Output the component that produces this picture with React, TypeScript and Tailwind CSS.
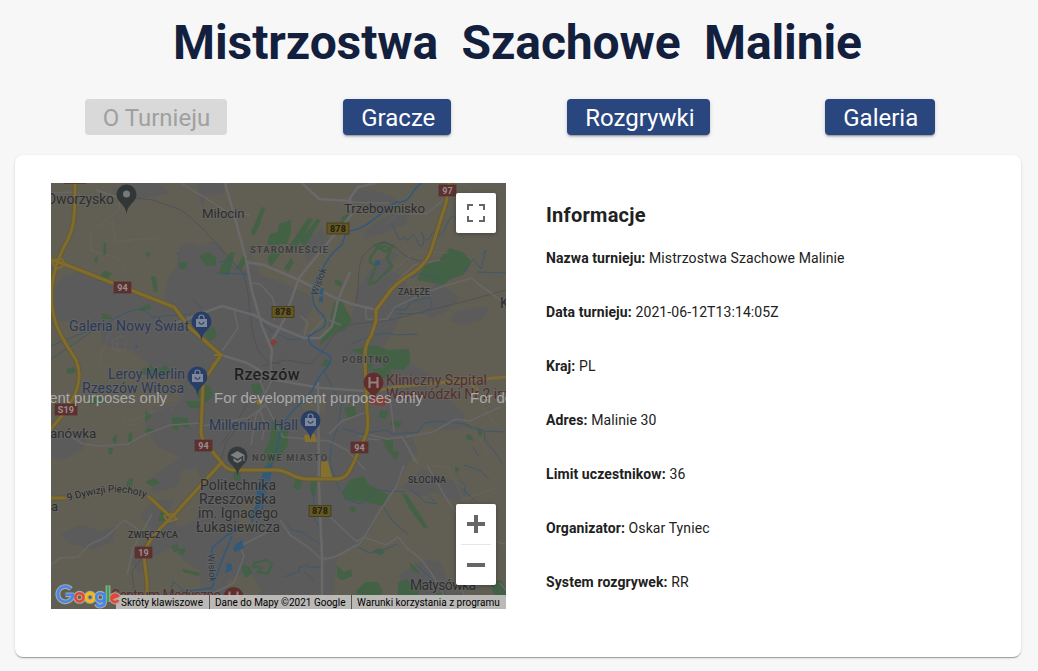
import type { ReactNode } from 'react';

const tabs = [
  { label: 'O Turnieju', width: 'w-[142px]', disabled: true },
  { label: 'Gracze', width: 'w-[108px]', disabled: false },
  { label: 'Rozgrywki', width: 'w-[143px]', disabled: false },
  { label: 'Galeria', width: 'w-[110px]', disabled: false },
];

const details = [
  ['Nazwa turnieju:', 'Mistrzostwa Szachowe Malinie'],
  ['Data turnieju:', '2021-06-12T13:14:05Z'],
  ['Kraj:', 'PL'],
  ['Adres:', 'Malinie 30'],
  ['Limit uczestnikow:', '36'],
  ['Organizator:', 'Oskar Tyniec'],
  ['System rozgrywek:', 'RR'],
];

const urban = [
  'M51 293 63 277 78 272 91 278 108 283 128 290 150 297 164 303 168 278 176 268 180 247 189 241 198 247 214 241 226 252 224 262 246 270 254 262 246 240 250 258 262 276 290 286 310 296 313 306 304 322 302 334 320 336 334 322 352 318 356 292 370 270 392 252 400 254 388 266 402 278 412 292 425 291 439 282 460 298 444 313 430 318 418 310 403 312 392 334 382 348 407 362 430 374 426 390 451 401 464 414 464 427 448 431 426 427 412 438 418 451 406 467 397 485 380 505 372 530 356 546 338 560 331 609 202 609 200 571 184 560 171 548 147 560 140 575 132 563 145 544 151 528 140 516 153 502 174 499 191 484 198 468 178 456 158 447 145 425 155 408 177 401 184 385 165 374 144 360 130 350 103 345 100 330 78 323 54 320Z',
  'M112 190 135 183 158 183 169 193 145 198 126 204Z',
  'M196 183 225 183 222 194 206 195 203 210Z',
  'M366 229 387 216 410 212 406 224 386 232 364 239Z',
  'M348 192 372 190 392 196 402 206 384 212 356 204Z',
  'M475 307 490 307 482 320 464 325 450 321 456 312Z',
  'M51 426 69 433 89 430 83 449 62 460 51 456Z',
  'M154 476 184 455 201 459 190 479 170 489 151 493Z',
  'M401 487 422 470 451 480 470 493 456 501 434 492 420 497Z',
  'M60 534 80 525 100 531 116 526 112 542 94 549 71 544Z',
  'M400 574 425 559 441 563 450 586 466 595 463 609 398 609Z',
  'M300 240 322 230 330 240 318 252 306 262Z',
];

const fields = [
  'M182 470 196 468 204 486 196 520 178 528 170 510Z',
  'M338 556 352 548 372 552 380 560 366 580 346 596 334 580Z',
  'M240 500 258 498 254 530 238 536Z',
  'M226 580 250 572 262 590 248 609 232 606Z',
  'M300 404 324 400 326 412 306 414Z',
];

const parks = [
  'M267 245 270 234 278 232 279 224 291 220 291 232 287 244Z',
  'M262 207 265 208 260 224 254 236 251 232Z',
  'M289 246 308 218 313 219 296 249Z', 'M300 240 317 219 321 220 304 248Z',
  'M268 257 276 250 280 254 270 268ZM284 268 291 258 294 262 288 272Z',
  'M270 253 276 250 276 258 268 262Z',
  'M199 256 208 252 216 258 216 265 206 266Z', 'M178 263 187 262 186 269 180 269Z',
  'M222 264 230 252 235 253 229 275 219 274Z', 'M235 270 243 256 249 258 241 269Z',
  'M417 280 424 266 438 260 445 253 450 248 464 253 471 262 464 274 451 279 442 285Z',
  'M151 276 156 277 158 291 154 292Z', 'M145 253 150 252 149 258Z', 'M104 243 106 243 106 255 103 255Z', 'M94 259 98 256 96 265Z', 'M97 281 104 271 112 273 106 282Z',
  'M138 308 150 304 151 309 141 311Z', 'M102 313 111 316 112 319 102 319Z',
  'M334 303 341 300 352 320 346 329 334 334 320 345 322 334 328 328Z',
  'M350 350 374 345 388 350 409 349 410 362 404 370 388 369 376 360Z',
  'M372 369 388 367 393 376 376 379Z', 'M325 359 330 361 328 366 321 366Z',
  'M196 382 210 386 213 396 204 404 197 396Z', 'M185 401 200 401 201 408 190 408Z', 'M142 369 151 365 157 371 165 365 173 372 165 377 141 374Z',
  'M172 417 188 418 189 428 179 425 178 431 172 428Z', 'M145 411 153 416 145 422Z', 'M147 428 155 430 151 434 145 432Z', 'M112 439 117 434 116 446Z', 'M129 433 132 432 132 445 128 442Z', 'M108 448 113 448 112 454 109 454Z',
  'M251 384 260 383 264 390 259 395 252 391Z', 'M272 420 280 422 288 432 288 445 278 460 268 466 264 452 270 440Z',
  'M296 478 303 478 300 490 293 488Z', 'M311 480 317 481 315 497 310 492Z',
  'M342 492 350 480 364 476 368 484 388 495 383 506 365 502 344 499Z',
  'M392 420 402 423 399 428 390 425Z', 'M382 439 393 441 393 451 399 452 396 460 387 450Z', 'M406 494 417 510 428 528 424 528 409 508 402 494Z',
  'M128 480 133 478 132 488 126 487Z', 'M145 482 154 478 160 483 151 486Z', 'M171 546 177 544 180 550 174 552Z', 'M182 569 201 573 198 576 183 572Z',
  'M179 550 186 547 184 555 180 554Z', 'M161 511 168 513 167 520 158 522Z', 'M233 471 240 471 241 481 234 480Z',
  'M344 572 351 569 352 576 343 580 337 578 337 566Z', 'M356 591 365 582 378 582 383 592 375 602 359 600Z', 'M398 583 407 579 414 588 421 590 414 600 398 596Z', 'M436 594 445 591 446 605 439 603Z',
  'M352 599 361 589 370 595 362 609 350 606Z',
  'M381 410 389 412 385 419 378 417Z', 'M352 506 356 509 354 513 349 510Z', 'M378 548 386 552 380 555 372 552Z', 'M409 562 414 566 420 573 413 572Z',
  'M335 279 342 282 341 287 335 284Z', 'M66 369 74 367 76 372 68 374Z', 'M88 397 103 397 108 403 90 404Z',
  'M206 329 214 327 217 336 210 341 205 336Z', 'M342 217 350 213 348 220 340 226Z',
  'M478 428 482 430 482 436 478 435Z', 'M467 434 472 436 473 441 466 439Z', 'M455 467 460 468 456 474Z', 'M490 581 501 580 506 588 506 600 494 594Z',
  'M242 565 250 567 252 573 246 578 243 573Z', 'M366 362 374 364 370 372Z', 'M344 408 354 406 357 416 348 418Z',
];

const parkOutlines = [
  'M370 258 377 248 385 246 391 250 387 258 392 266 376 282 369 284 376 266 370 262Z',
  'M376 246 384 242 393 246 386 252Z',
  'M254 563 266 560 272 564 268 574 258 572 262 568 253 566Z',
];

const water = [
  'M422 183C409 191 413 200 401 202C391 200 394 209 382 213C372 221 362 230 348 231C341 239 345 245 339 247C331 254 325 262 320 274L313 288C311 306 317 310 322 314C328 322 326 328 317 331L309 336C306 346 321 350 330 356C333 361 327 368 319 377C315 384 313 391 306 398C297 407 289 413 281 427L277 450C269 462 273 475 266 488C262 498 264 510 258 520',
  'M240 529 226 536 212 548 211 560M232 536 222 560 212 588 190 591',
];

const streams = [
  'M219 262 231 260 246 277M215 273 247 274',
  'M51 359 68 348 88 334 98 326 102 322',
  'M51 346C74 335 102 328 112 320 136 307 141 306 152 317L191 314',
  'M192 298 202 309M238 309 252 313 270 330 290 340 305 338',
  'M392 224C397 235 400 245 404 236C409 248 411 228 416 238C422 257 427 238 421 232C431 253 430 224 436 235C447 239 447 211 455 217C461 231 466 213 473 222L480 212 488 217',
  'M389 317 395 309 406 310 410 302 430 297 432 307 422 313 396 314',
  'M411 278 420 273 438 280M477 272 506 273M465 272 473 259 481 269 486 250 482 255',
  'M325 372 334 391 342 402 338 426 331 446 330 465',
  'M342 428 360 434 386 430 393 434 418 432 424 423 438 421 466 424 484 431 506 432',
  'M484 431 485 440 494 451 502 463M464 425 477 431',
  'M330 465 339 488 348 500 361 504 376 490 406 492',
  'M383 506 393 522 408 534M409 488 425 502 437 504 428 495',
  'M464 465 479 470 489 479M459 480 466 486 464 491 476 501',
  'M320 545 322 530 315 520 313 490M286 522 292 530 302 532 318 543',
  'M284 577 300 571 298 568 308 564M304 572 314 580M306 567 322 567',
  'M358 547 369 553 385 549 397 544',
  'M158 597 171 592 190 591M171 592 173 581 190 596',
  'M351 344 372 335 387 333 396 335 418 334',
  'M415 563 435 582 441 593M478 456 473 447',
];

const streets = [
  'M225 183 233 211 246 259 252 291 262 326 272 350 271 362',
  'M246 262 264 265 299 280 335 298 352 304 377 310',
  'M352 214 325 246 299 278 284 320 270 344',
  'M176 323 222 306 254 315 270 324 304 338 320 338 332 326 338 300 350 272',
  'M302 183 319 199 350 201M377 183 358 187 350 198 350 210',
  'M221 355 247 363 276 380 321 388 366 391',
  'M318 382 319 488 322 555 322 609',
];

const minorStreets = [
  'M181 183C197 193 214 203 226 211L250 215M251 283 260 284 272 297 276 309 274 320',
  'M234 309 238 328 222 351M300 316 308 322 304 336',
  'M350 202 372 203 389 203M398 214 426 214 446 198 450 196',
  'M271 355 271 382 262 400 260 410 265 425 262 440M257 372 265 394M251 445 256 415 266 402',
  'M201 423 170 425 144 435 128 444 98 446 83 444 69 435 54 430',
  'M202 426 248 418 266 405 283 437 329 441 347 450 358 462 365 470',
  'M329 434 342 421 367 412M390 397 394 432M366 434 387 439 402 437 418 464',
  'M359 436 370 439 379 440M404 440 415 462M405 437 433 432 456 419 470 421 500 407',
  'M427 465 443 493 451 506 460 518M404 465 396 487 379 512 363 539 359 544 340 555 323 560',
  'M329 516 357 542M357 541 364 537 386 545 398 537 407 548 421 559 432 574 448 603',
  'M280 520 290 535 308 547 320 558 333 558 356 545',
  'M51 565 60 558 78 557 89 545 106 537 124 520 136 528 148 539',
  'M180 609 234 583 244 556 240 546 270 531M127 575 133 549 152 514',
  'M377 310 390 288 414 265 440 260M377 309 366 308 366 319 379 320M379 320 387 319 395 307 410 300 428 292 441 287 472 278 477 283 506 304',
  'M51 193 79 192M96 190 120 198M324 319 309 335M329 320 341 325',
  'M506 544 497 542M500 583 506 590M462 590 470 609',
];

const rails = [
  'M136 198 153 200 181 210C206 228 220 250 239 268C249 277 248 303 252 328 256 352 262 362 280 364',
  'M262 366 286 360 310 364 322 352 333 336 345 325 372 322 390 320 430 310 470 300 506 290',
  'M356 303C361 278 354 258 372 247C382 238 394 244 404 255 421 264 436 263 448 256',
  'M221 444 235 425 248 402 271 370M220 465 226 442 244 418M136 609 132 571 142 558 152 531',
];

const yellowRoads = [
  'M75 183C75 218 74 230 65 245C53 268 49 290 53 312C56 331 67 345 76 360C85 380 73 400 65 412L50 430',
  'M51 260 64 264 174 307 190 328 221 355 203 382 201 432Q201 440 211 450L222 463Q226 469 232 470L276 470C288 470 292 478 306 479L339 479Q347 478 352 466L366 435Q369 427 367 412L365 361Q364 345 371 336L376 321 376 310 391 290Q398 282 414 272Q429 262 433 244L446 203 449 183',
  'M221 463 172 517Q145 541 144 556L147 582Q148 594 144 609',
  'M51 498 66 498M148 496 172 518',
];

const pinPath = 'M0 18C-1 11-4 9-7.5 5A10 10 0 1 1 7.5 5C4 9 1 11 0 18Z';

function Label({ x, y, size = 14, fill = '#2c2e30', children, spacing = 0, weight = 400, length }: {
  x: number; y: number; size?: number; fill?: string; children: ReactNode; spacing?: number; weight?: number; length?: number;
}) {
  return (
    <text x={x} y={y} fontSize={size} fill={fill} fontWeight={weight} letterSpacing={spacing} textLength={length}
      stroke="#6b6a66" strokeWidth="2" strokeOpacity=".5" paintOrder="stroke" strokeLinejoin="round">
      {children}
    </text>
  );
}

function RoadSign({ x, y, children, yellow = false, width = 17 }: { x: number; y: number; children: string; yellow?: boolean; width?: number }) {
  return (
    <g>
      <rect x={x} y={y} width={width} height="11" fill={yellow ? '#655720' : '#5e3030'} stroke={yellow ? '#3d3518' : '#593030'} strokeWidth=".7" />
      <text x={x + width / 2} y={y + 8.8} fontSize="9" fontWeight="700" textAnchor="middle" letterSpacing=".2" fill={yellow ? '#20201a' : '#989090'}>{children}</text>
    </g>
  );
}

function Pin({ x, y, fill, kind }: { x: number; y: number; fill: string; kind: 'shop' | 'hospital' | 'school' | 'dot' }) {
  return (
    <g transform={`translate(${x} ${y})`}>
      <path d={pinPath} fill={fill} />
      {kind === 'dot' && <circle cy="-2" r="3.5" fill="#74797a" />}
      {kind === 'shop' && <g><path d="M-5.5-4H5.5V4H-5.5Z" fill="#7f889a" /><path d="M-2.5-4V-5.5A2.5 2.5 0 0 1 2.5-5.5V-4" fill="none" stroke="#7f889a" strokeWidth="1.2" /><path d="M-2.7-1Q0 3.5 2.7-1" fill="none" stroke={fill} strokeWidth="1.2" /></g>}
      {kind === 'hospital' && <path d="M-4-7V4M4-7V4M-4-1.5H4" fill="none" stroke="#987e7e" strokeWidth="2.1" />}
      {kind === 'school' && <path d="M-7-3 0-7 7-3 0 1Z M-4 0V3L0 5 4 3V0L0 3ZM5.8-3H7V3H5.8Z" fill="#7d8182" />}
    </g>
  );
}

function TournamentMap() {
  return (
    <svg viewBox="51 183 455 426" className="block h-full w-full font-['Roboto',sans-serif]">
      <rect x="51" y="183" width="455" height="426" fill="#615e54" />
      {urban.map((d) => <path key={d} d={d} fill="#5b5b5b" />)}
      {fields.map((d) => <path key={d} d={d} fill="#615e54" />)}
      {parks.map((d) => <path key={d} d={d} fill="#436144" />)}
      <g fill="none" stroke="#436144" strokeWidth="2.4">{parkOutlines.map((d) => <path key={d} d={d} />)}</g>
      <g fill="none" stroke="#525256" strokeWidth="1">{rails.map((d) => <path key={d} d={d} />)}</g>
      <g fill="none" stroke="#3f586b" strokeWidth="1">{streams.map((d) => <path key={d} d={d} />)}</g>
      <g fill="none" stroke="#676767" strokeWidth="1.6" strokeLinejoin="round">{minorStreets.map((d) => <path key={d} d={d} />)}</g>
      <g fill="none" stroke="#696969" strokeWidth="2.6" strokeLinejoin="round">{streets.map((d) => <path key={d} d={d} />)}</g>
      <g fill="none" stroke="#6b6a64" strokeWidth=".7" opacity=".7">
        <path d="M112 341 121 336 127 340 124 351 113 350ZM118 337 117 351M113 344 126 344M122 413 127 425 138 424M129 422 175 403M185 393 171 411" />
        <path d="M387 276 409 257 402 241M409 257 420 251 448 253M480 403 498 428M471 424 489 455M430 465 449 468 463 499 480 494 498 487M459 183 472 191M398 213 385 224" />
        <path d="M120 198 119 210 97 227 90 235 91 250 98 253M91 250 119 259 127 271M112 220 116 242 140 239 158 239M99 365 102 351 116 320" />
      </g>
      <g fill="none" stroke="#33597a" strokeWidth="1.6">{water.map((d) => <path key={d} d={d} />)}</g>
      <path d="M265 466 272 464 272 474 264 483 265 496 258 510 252 524 250 516 256 505 257 490ZM236 544 242 540 244 548 235 552 233 549ZM375 261 380 260 380 265 375 265ZM320 289 324 288 323 295 319 294ZM319 297 323 296 323 302 319 302ZM227 563 232 564 232 570 225 573Z" fill="#31597a" />
      <path d="M136 345 138 347 135 349ZM177 252 179 253 178 255Z" fill="#315b78" />
      <g fill="none" stroke="#635a38" strokeWidth="5" strokeLinejoin="round">{yellowRoads.map((d) => <path key={d} d={d} />)}</g>
      <g fill="none" stroke="#816c2c" strokeWidth="3" strokeLinejoin="round">{yellowRoads.map((d) => <path key={d} d={d} />)}</g>
      <path d="M366 393 394 387 506 377" fill="none" stroke="#7b6c35" strokeWidth="2.8" />
      <path d="M469 384 478 389 475 393 467 391" fill="none" stroke="#7b6c35" strokeWidth="1.6" />
      <path d="M164 516 172 514 177 519 168 522ZM51 260 62 259 65 265 56 269ZM214 355 222 355 212 366" fill="none" stroke="#816c2c" strokeWidth="1.8" />
      <path d="M321 462 328 461 332 477 321 477ZM304 435 315 434 317 442 305 442ZM256 400 263 400 261 405 257 404Z" fill="#86702d" />
      <path d="M370 397 386 396 388 402 384 406 369 404ZM271 340 274 339 277 342 273 346 270 343Z" fill="#813f3b" />

      <RoadSign x={114} y={282}>94</RoadSign><RoadSign x={195} y={440}>94</RoadSign><RoadSign x={351} y={442}>94</RoadSign>
      <RoadSign x={439} y={185}>97</RoadSign><RoadSign x={55} y={404} width={22}>S19</RoadSign><RoadSign x={135} y={547}>19</RoadSign>
      <RoadSign x={327} y={223} width={22} yellow>878</RoadSign><RoadSign x={272} y={306.5} width={22} yellow>878</RoadSign><RoadSign x={309} y={505.5} width={22} yellow>878</RoadSign>
      <path d="M64 183.5H86" stroke="#603737" />

      <Label x={47} y={204} length={67}>Dworzysko</Label>
      <Label x={202} y={217.5} size={13.3} length={42.5}>Miłocin</Label>
      <Label x={344} y={213} size={13.3} length={81}>Trzebownisko</Label>
      <Label x={250} y={253} size={9.3} fill="#3b3d3f" weight={700} length={78}>STAROMIEŚCIE</Label>
      <Label x={398} y={295} size={9.2} fill="#303233" weight={500} length={32}>ZAŁĘŻE</Label>
      <Label x={342} y={363} size={9.2} fill="#3b3d3f" weight={700} length={47}>POBITNO</Label>
      <Label x={500} y={308}>K</Label>
      <Label x={69} y={331} fill="#29395a" length={120}>Galeria Nowy Świat</Label>
      <Label x={108} y={379} fill="#29395a" length={77}>Leroy Merlin</Label>
      <Label x={82} y={393} fill="#29395a" length={102}>Rzeszów Witosa</Label>
      <Label x={234} y={379.5} size={16} fill="#1e2021" weight={500} length={65.5}>Rzeszów</Label>
      <Label x={209} y={430} fill="#29395a" length={89}>Millenium Hall</Label>
      <Label x={386} y={385} fill="#552e2e" length={101}>Kliniczny Szpital</Label>
      <Label x={386} y={399} fill="#552e2e">Wojewódzki Nr 2 im.</Label>
      <Label x={50} y={438} size={13.3}>anówka</Label>
      <Label x={252} y={461} size={9.2} fill="#3b3d3f" weight={700} length={75}>NOWE MIASTO</Label>
      <Label x={408} y={483} size={9} weight={500} length={38}>SŁOCINA</Label>
      <Label x={200} y={490} length={76}>Politechnika</Label><Label x={199} y={504} length={77}>Rzeszowska</Label><Label x={198} y={518} length={80}>im. Ignacego</Label><Label x={196} y={532} length={84}>Łukasiewicza</Label>
      <Label x={128} y={538} size={9.3} weight={500} length={50}>ZWIĘCZYCA</Label>
      <Label x={51} y={511} size={13}>a</Label>
      <Label x={410} y={590} length={66}>Matysówka</Label>
      <Label x={111} y={600} fill="#552e2e" length={110}>Centrum Medyczne</Label>
      <Label x={171} y={613} fill="#552e2e">Promedica</Label>
      <path id="district-road" d="M68 501Q88 495 108 492.5Q128 491 149 499" fill="none" />
      <text fontSize="10" fill="#242526" stroke="#68665f" strokeWidth="1.8" paintOrder="stroke"><textPath href="#district-road" textLength="79">9 Dywizji Piechoty</textPath></text>
      <g transform="translate(317 296) rotate(-70)"><Label x={0} y={0} size={9.5} fill="#29384a">Wisłok</Label></g>
      <g transform="translate(208 554) rotate(87)"><Label x={0} y={0} size={9.5} fill="#29384a">Wisłok</Label></g>

      <Pin x={126.5} y={196} fill="#313637" kind="dot" />
      <Pin x={201.5} y={323} fill="#293e67" kind="shop" />
      <Pin x={197.5} y={378} fill="#293e67" kind="shop" />
      <Pin x={310.5} y={422} fill="#293e67" kind="shop" />
      <Pin x={373.5} y={384} fill="#602e2d" kind="hospital" />
      <Pin x={237.5} y={458} fill="#353a3c" kind="school" />
      <Pin x={233.5} y={598.5} fill="#602e2d" kind="hospital" />
      <g fontFamily="Liberation Sans, Arial, sans-serif" fontSize="15" fill="#aaa9a8">
        <text x="-42" y="403" textLength="209">For development purposes only</text>
        <text x="214" y="403" textLength="209">For development purposes only</text>
        <text x="470" y="403" textLength="209">For development purposes only</text>
      </g>
    </svg>
  );
}

const logoStrokes = [
  { d: 'M17 7A7.6 7.6 0 1 0 19 12.8H11.5', color: '#4285f4' },
  { d: 'M29.6 15.3A4.1 4.1 0 1 1 21.4 15.3A4.1 4.1 0 1 1 29.6 15.3', color: '#ea4335' },
  { d: 'M40.2 15.3A4.1 4.1 0 1 1 32 15.3A4.1 4.1 0 1 1 40.2 15.3', color: '#fbbc05' },
  { d: 'M50.4 15.3A4.1 4.1 0 1 1 42.2 15.3A4.1 4.1 0 1 1 50.4 15.3M50.6 11V20C50.6 24.6 44 25.5 42.4 21.8', color: '#4285f4' },
  { d: 'M54 3.5V20', color: '#34a853' },
  { d: 'M57.5 16.5 63.8 13.8A3.7 3.7 0 1 0 64.3 18', color: '#ea4335' },
];

function GoogleLogo() {
  return (
    <svg className="absolute bottom-0 left-[3px] h-[27px] w-[67px]" viewBox="0 0 67 27" fill="none">
      <g stroke="#aaa99e" strokeWidth="4.8" strokeLinejoin="round">{logoStrokes.map(({ d }) => <path key={d} d={d} />)}</g>
      <g strokeWidth="2.5">{logoStrokes.map(({ d, color }) => <path key={d} d={d} stroke={color} />)}</g>
    </svg>
  );
}

export default function App() {
  return (
    <main className="h-[671px] w-[1038px] overflow-hidden bg-[#f7f7f7] font-['Roboto',sans-serif] text-[#212121]">
      <h1 className="h-[99px] pt-[15px] pr-[3px] text-center text-[48px] leading-[56px] font-bold tracking-[-0.12px] whitespace-pre text-[#13203d]">Mistrzostwa  Szachowe  Malinie</h1>
      <nav className="ml-[35px] grid h-[36px] w-[966px] grid-cols-4 justify-items-center">
        {tabs.map((tab) => (
          <button key={tab.label} disabled={tab.disabled} className={`${tab.width} h-[36px] rounded-[4px] pt-px pl-[18px] text-left text-[24px] leading-[36px] whitespace-nowrap ${tab.disabled ? 'bg-[#d9d9d9] text-[#a0a0a0]' : 'bg-[#29467f] text-white shadow-[0_3px_1px_-2px_rgba(0,0,0,.2),0_2px_2px_0_rgba(0,0,0,.14),0_1px_5px_0_rgba(0,0,0,.12)]'}`}>{tab.label}</button>
        ))}
      </nav>
      <section className="mt-[20px] ml-[15px] flex h-[502px] w-[1006px] rounded-[8px] bg-white pt-[28px] pl-[36px] shadow-[0_2px_1px_-1px_rgba(0,0,0,.2),0_1px_1px_0_rgba(0,0,0,.14),0_1px_3px_0_rgba(0,0,0,.12)]">
        <div className="relative h-[426px] w-[455px] shrink-0 overflow-hidden">
          <TournamentMap />
          <button aria-label="Pełny ekran" className="absolute top-[10px] right-[10px] flex h-[40px] w-[40px] items-center justify-center rounded-[2px] bg-white shadow-[0_1px_4px_rgba(0,0,0,.3)]">
            <svg width="18" height="18" viewBox="0 0 18 18"><path d="M0 6V0H6V2H2V6ZM12 0H18V6H16V2H12ZM0 12H2V16H6V18H0ZM16 12H18V18H12V16H16Z" fill="#666" /></svg>
          </button>
          <div className="absolute right-[10px] bottom-[24px] flex h-[81px] w-[40px] flex-col items-center rounded-[2px] bg-white shadow-[0_1px_4px_rgba(0,0,0,.3)]">
            <button aria-label="Powiększ" className="flex h-[40px] w-[40px] items-center justify-center"><svg width="18" height="18" viewBox="0 0 18 18"><path d="M7 0H11V7H18V11H11V18H7V11H0V7H7Z" fill="#666" /></svg></button>
            <div className="h-px w-[30px] bg-[#e6e6e6]" />
            <button aria-label="Pomniejsz" className="flex h-[40px] w-[40px] items-center justify-center"><svg width="18" height="4" viewBox="0 0 18 4"><path d="M0 0H18V4H0Z" fill="#666" /></svg></button>
          </div>
          <div className="absolute right-0 bottom-0 flex h-[14px] text-[10px] leading-[15px] whitespace-nowrap text-black">
            <span className="w-[93px] bg-[#c0bfbd]/95 pl-[5px]">Skróty klawiszowe</span>
            <span className="w-[142px] border-l border-[#555] bg-[#c0bfbd]/95 pl-[5px]">Dane do Mapy ©2021 Google</span>
            <span className="w-[155px] border-l border-[#555] bg-[#c0bfbd]/95 pl-[5px]">Warunki korzystania z programu</span>
          </div>
          <GoogleLogo />
        </div>
        <div className="ml-[40px] pt-[16px]">
          <h2 className="text-[20px] leading-[32px] font-bold tracking-[0.25px]">Informacje</h2>
          <dl className="mt-[17px] text-[14px] leading-[20px] tracking-[0.09px]">
            {details.map(([term, value]) => (
              <div key={term} className="flex h-[54px] gap-[3.7px]"><dt className="font-bold">{term}</dt><dd>{value}</dd></div>
            ))}
          </dl>
        </div>
      </section>
    </main>
  );
}
